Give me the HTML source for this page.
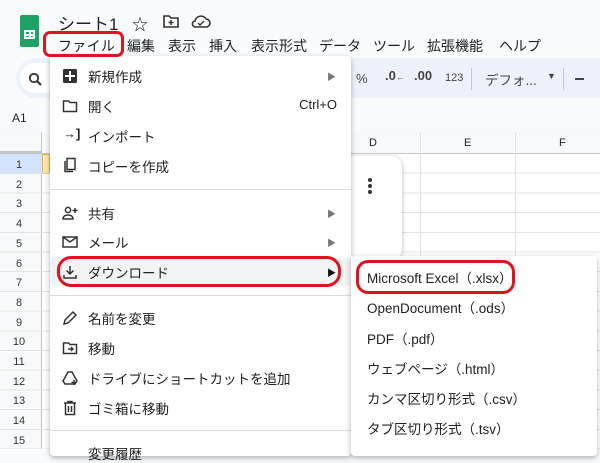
<!DOCTYPE html><html><head><meta charset="utf-8"><style>
*{margin:0;padding:0;box-sizing:border-box}
body{width:600px;height:449px;overflow:hidden;position:relative;background:#f9fbfd;font-family:"Liberation Sans","Noto Sans CJK JP",sans-serif;color:#202124}
.a{position:absolute;white-space:nowrap}
.menu{position:absolute;background:#fff;box-shadow:0 2px 6px rgba(0,0,0,.3);border-radius:4px}
.it{position:absolute;left:38px;font-size:13.5px;color:#202124}
.ic{position:absolute;left:12px;width:16px;height:16px}
.arr{position:absolute;right:15px;font-size:9px;color:#777}
.sep{position:absolute;left:0;right:0;height:1px;background:#dadce0}
.red{position:absolute;border:3px solid #e0141e;border-radius:8px}
.sub{position:absolute;left:16px;font-size:13.5px;color:#202124}
</style></head><body>
<div class="a" style="left:20px;top:15px;width:19px;height:32px;background:#1ea362;border-radius:2px"></div>
<div class="a" style="left:24px;top:30px;width:11px;height:9px;border:2px solid #fff;background:linear-gradient(#fff,#fff) 50% 0/2px 100% no-repeat,linear-gradient(#fff,#fff) 0 50%/100% 2px no-repeat"></div>
<div class="a" style="left:58px;top:10px;font-size:17px">シート1</div>
<div class="a" style="left:132px;top:11px;font-size:16px">☆</div>
<svg class="a" style="left:162px;top:13px" width="18" height="16" viewBox="0 0 18 16"><path d="M2 3h5l2 2h7v9H2z" fill="none" stroke="#333" stroke-width="1.6"/><path d="M9 7v5M6.5 9.5h5" stroke="#333" stroke-width="1.5"/></svg>
<svg class="a" style="left:191px;top:14px" width="20" height="14" viewBox="0 0 20 14"><path d="M5 13h10a4 4 0 0 0 0-8 6 6 0 0 0-11 2 3 3 0 0 0 1 6z" fill="none" stroke="#333" stroke-width="1.6"/><path d="M7 9l2 2 4-4" fill="none" stroke="#333" stroke-width="1.4"/></svg>
<div class="a" style="left:58px;top:36px;font-size:14px;letter-spacing:.3px">ファイル</div>
<div class="a" style="left:127px;top:36px;font-size:14px">編集</div>
<div class="a" style="left:168px;top:36px;font-size:14px">表示</div>
<div class="a" style="left:209px;top:36px;font-size:14px">挿入</div>
<div class="a" style="left:251px;top:36px;font-size:14px">表示形式</div>
<div class="a" style="left:319px;top:36px;font-size:14px">データ</div>
<div class="a" style="left:373px;top:36px;font-size:14px">ツール</div>
<div class="a" style="left:427px;top:36px;font-size:14px">拡張機能</div>
<div class="a" style="left:499px;top:36px;font-size:14px">ヘルプ</div>
<div class="a" style="left:16px;top:58px;width:584px;height:40px;background:#edf2fa;border-radius:20px 0 0 20px"></div>
<div class="a" style="left:20px;top:63px;width:40px;height:30px;background:#fff;border-radius:15px"></div>
<svg class="a" style="left:28px;top:72px" width="14" height="14"><circle cx="6" cy="6" r="4.2" fill="none" stroke="#333" stroke-width="1.8"/><path d="M9 9l4 4" stroke="#333" stroke-width="2"/></svg>
<div class="a" style="left:356px;top:71px;font-size:13px;color:#444">%</div>
<div class="a" style="left:385px;top:68px;font-size:13px;font-weight:bold;color:#444">.0<span style="font-size:9px">←</span></div>
<div class="a" style="left:414px;top:68px;font-size:13px;font-weight:bold;color:#444">.00</div>
<div class="a" style="left:445px;top:72px;font-size:11px;color:#444">123</div>
<div class="a" style="left:471px;top:68px;width:1px;height:22px;background:#c7c7c7"></div>
<div class="a" style="left:485px;top:69px;font-size:13.5px;color:#444">デフォ...</div>
<div class="a" style="left:547px;top:71px;font-size:9px;color:#444">▼</div>
<div class="a" style="left:563px;top:68px;width:1px;height:22px;background:#c7c7c7"></div>
<div class="a" style="left:575px;top:78px;width:9px;height:2px;background:#444"></div>
<div class="a" style="left:12px;top:111px;font-size:12px">A1</div>
<div class="a" style="left:0;top:132px;width:600px;height:317px;background:#fff"></div>
<div class="a" style="left:0;top:132px;width:600px;height:22px;background:#f8f9fa;border-bottom:1px solid #c4c7c5"></div>
<div class="a" style="left:0;top:132px;width:42px;height:22px;background:#f8f9fa;border-right:1px solid #c4c7c5;border-bottom:3px solid #c4c7c5"></div>
<div class="a" style="left:0;top:154px;width:42px;height:295px;background:#f8f9fa;border-right:1px solid #c4c7c5"></div>
<div class="a" style="left:0;top:154px;width:42px;height:20px;background:#d3e3fd"></div>
<div class="a" style="left:42px;top:154px;width:8px;height:20px;background:#fce8b2;border:1px solid #e3b341"></div>
<div class="a" style="left:0;top:154px;width:600px;height:295px;background:repeating-linear-gradient(#0000 0 18.7px,#e2e3e3 18.7px 19.7px)"></div>
<div class="a" style="left:420px;top:132px;width:1px;height:317px;background:#e2e3e3"></div>
<div class="a" style="left:515px;top:132px;width:1px;height:317px;background:#e2e3e3"></div>
<div class="a" style="left:369px;top:137px;font-size:11px">D</div>
<div class="a" style="left:464px;top:137px;font-size:11px">E</div>
<div class="a" style="left:559px;top:137px;font-size:11px">F</div>
<div class="a" style="left:0;top:156px;width:38px;font-size:11px;line-height:19.7px;text-align:center;color:#333;white-space:normal">1<br>2<br>3<br>4<br>5<br>6<br>7<br>8<br>9<br>10<br>11<br>12<br>13<br>14<br>15</div>
<div class="a" style="left:330px;top:156px;width:72px;height:104px;background:#fff;border-radius:10px;box-shadow:0 1px 4px rgba(0,0,0,.3)"></div>
<div class="a" style="left:368px;top:178px;width:4px;height:4px;border-radius:2px;background:#333;box-shadow:0 6px #333,0 12px #333"></div>
<div class="menu" style="left:50px;top:56px;width:301px;height:400px">
 <svg class="ic" style="top:12px" viewBox="0 0 16 16"><rect x="1" y="1" width="14" height="14" rx="1.5" fill="#333"/><path d="M8 3v10M3 8h10" stroke="#fff" stroke-width="2"/></svg>
 <div class="it" style="top:10px">新規作成</div><div class="arr" style="top:14px">▶</div>
 <svg class="ic" style="top:42px" viewBox="0 0 16 16"><path d="M1.5 3h5l1.5 1.5h6.5v9h-13z" fill="none" stroke="#333" stroke-width="1.5"/></svg>
 <div class="it" style="top:40px">開く</div><div class="a" style="right:14px;top:41px;font-size:13px">Ctrl+O</div>
 <div class="a" style="left:13px;top:70px;font-size:13px;font-weight:bold">→]</div>
 <div class="it" style="top:70px">インポート</div>
 <svg class="ic" style="top:101px" viewBox="0 0 16 16"><path d="M5 1.5h8v11H5zM3 4v10.5h8" fill="none" stroke="#333" stroke-width="1.5"/></svg>
 <div class="it" style="top:100px">コピーを作成</div>
 <div class="sep" style="top:133px"></div>
 <svg class="ic" style="top:149px" viewBox="0 0 16 16"><circle cx="6" cy="5" r="2.6" fill="none" stroke="#333" stroke-width="1.5"/><path d="M1 14c0-3 2.5-4 5-4s5 1 5 4z" fill="none" stroke="#333" stroke-width="1.5"/><path d="M13 3v5M10.5 5.5h5" stroke="#333" stroke-width="1.5"/></svg>
 <div class="it" style="top:147px">共有</div><div class="arr" style="top:151px">▶</div>
 <svg class="ic" style="top:178px" viewBox="0 0 16 16"><rect x="1" y="3" width="14" height="10" fill="none" stroke="#333" stroke-width="1.5"/><path d="M1 3l7 5 7-5" fill="none" stroke="#333" stroke-width="1.5"/></svg>
 <div class="it" style="top:176px">メール</div><div class="arr" style="top:180px">▶</div>
 <div class="a" style="left:0;top:202px;width:301px;height:28px;background:#f1f3f4"></div>
 <svg class="ic" style="top:208px" viewBox="0 0 16 16"><path d="M8 2v8M4.5 6.5L8 10l3.5-3.5M2 11v3h12v-3" fill="none" stroke="#333" stroke-width="1.5"/></svg>
 <div class="it" style="top:206px">ダウンロード</div><div class="arr" style="top:210px;color:#111">▶</div>
 <div class="sep" style="top:239px"></div>
 <svg class="ic" style="top:254px" viewBox="0 0 16 16"><path d="M2 14l1-4 8-8 3 3-8 8z" fill="none" stroke="#333" stroke-width="1.5"/></svg>
 <div class="it" style="top:252px">名前を変更</div>
 <svg class="ic" style="top:284px" viewBox="0 0 16 16"><path d="M1.5 3h5l1.5 1.5h6.5v9h-13z" fill="none" stroke="#333" stroke-width="1.5"/><path d="M6 9h5M9 7l2 2-2 2" fill="none" stroke="#333" stroke-width="1.4"/></svg>
 <div class="it" style="top:282px">移動</div>
 <svg class="ic" style="top:314px" viewBox="0 0 16 16"><path d="M6 2h4l5 9-2 3H3l-2-3z" fill="none" stroke="#333" stroke-width="1.5"/><path d="M12 10v5M9.5 12.5h5" stroke="#333" stroke-width="1.5"/></svg>
 <div class="it" style="top:312px">ドライブにショートカットを追加</div>
 <svg class="ic" style="top:344px" viewBox="0 0 16 16"><path d="M2 3h12M6 3V1.5h4V3M3.5 3v11.5h9V3M6.5 6v6M9.5 6v6" fill="none" stroke="#333" stroke-width="1.5"/></svg>
 <div class="it" style="top:342px">ゴミ箱に移動</div>
 <div class="sep" style="top:374px"></div>
 <div class="it" style="top:387px">変更履歴</div>
</div>
<div class="menu" style="left:351px;top:256px;width:246px;height:200px;border-radius:0 4px 4px 4px">
 <div class="sub" style="top:11px">Microsoft Excel（.xlsx）</div>
 <div class="sub" style="top:41px">OpenDocument（.ods）</div>
 <div class="sub" style="top:72px">PDF（.pdf）</div>
 <div class="sub" style="top:102px">ウェブページ（.html）</div>
 <div class="sub" style="top:132px">カンマ区切り形式（.csv）</div>
 <div class="sub" style="top:162px">タブ区切り形式（.tsv）</div>
</div>
<div class="red" style="left:43px;top:31px;width:81px;height:26px;border-radius:7px"></div>
<div class="red" style="left:57px;top:256px;width:284px;height:31px;border-radius:14px"></div>
<div class="red" style="left:356px;top:260px;width:159px;height:34px;border-radius:12px"></div>
</body></html>
